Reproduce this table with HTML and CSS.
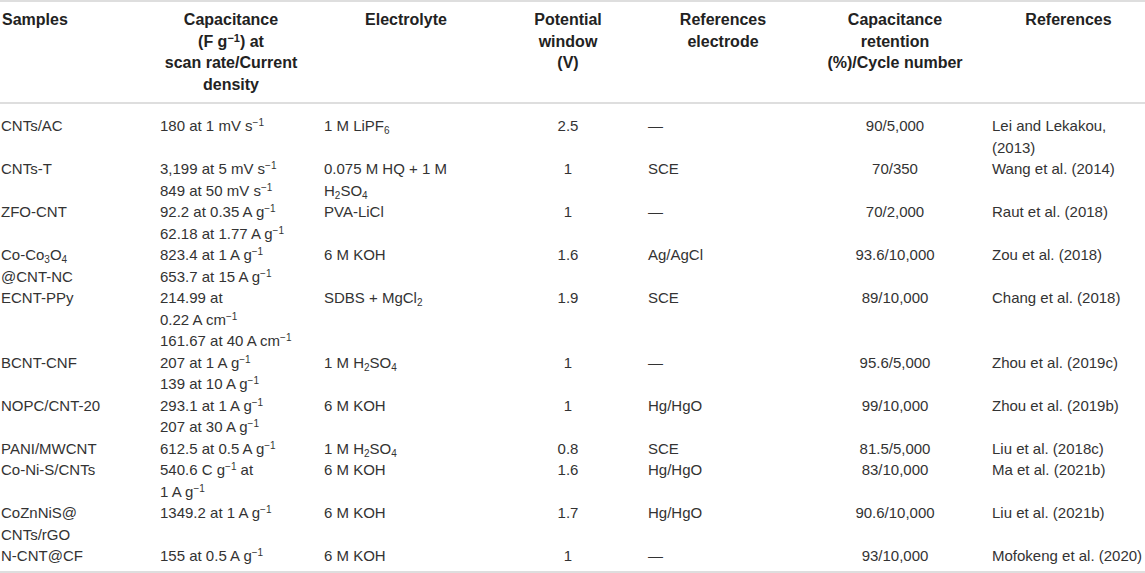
FILE: index.html
```html
<!DOCTYPE html>
<html lang="en">
<head>
    <meta charset="UTF-8">
    <meta name="viewport" content="width=device-width, initial-scale=1.0">
    <title>CNT supercapacitor comparison</title>
    <link rel="stylesheet" href="styles.css">
</head>
<body>
<table class="data-table">
    <colgroup>
        <col class="c-sample">
        <col class="c-cap">
        <col class="c-elec">
        <col class="c-pot">
        <col class="c-ref-el">
        <col class="c-ret">
        <col class="c-ref">
    </colgroup>
    <thead>
        <tr>
            <th class="left">Samples</th>
            <th class="cap-head">Capacitance<br>(F g<sup>&minus;1</sup>) at<br>scan rate/Current<br>density</th>
            <th>Electrolyte</th>
            <th>Potential<br>window<br>(V)</th>
            <th>References<br>electrode</th>
            <th>Capacitance<br>retention<br>(%)/Cycle number</th>
            <th>References</th>
        </tr>
    </thead>
    <tbody>
        <tr>
            <td>CNTs/AC</td>
            <td>180 at 1 mV s<sup>&minus;1</sup></td>
            <td>1 M LiPF<sub>6</sub></td>
            <td class="num">2.5</td>
            <td>&mdash;</td>
            <td class="num">90/5,000</td>
            <td>Lei and Lekakou,<br>(2013)</td>
        </tr>
        <tr>
            <td>CNTs-T</td>
            <td>3,199 at 5 mV s<sup>&minus;1</sup><br>849 at 50 mV s<sup>&minus;1</sup></td>
            <td>0.075 M HQ + 1 M<br>H<sub>2</sub>SO<sub>4</sub></td>
            <td class="num">1</td>
            <td>SCE</td>
            <td class="num">70/350</td>
            <td>Wang et al. (2014)</td>
        </tr>
        <tr>
            <td>ZFO-CNT</td>
            <td>92.2 at 0.35 A g<sup>&minus;1</sup><br>62.18 at 1.77 A g<sup>&minus;1</sup></td>
            <td>PVA-LiCl</td>
            <td class="num">1</td>
            <td>&mdash;</td>
            <td class="num">70/2,000</td>
            <td>Raut et al. (2018)</td>
        </tr>
        <tr>
            <td>Co-Co<sub>3</sub>O<sub>4</sub><br>@CNT-NC</td>
            <td>823.4 at 1 A g<sup>&minus;1</sup><br>653.7 at 15 A g<sup>&minus;1</sup></td>
            <td>6 M KOH</td>
            <td class="num">1.6</td>
            <td>Ag/AgCl</td>
            <td class="num">93.6/10,000</td>
            <td>Zou et al. (2018)</td>
        </tr>
        <tr>
            <td>ECNT-PPy</td>
            <td>214.99 at<br>0.22 A cm<sup>&minus;1</sup><br>161.67 at 40 A cm<sup>&minus;1</sup></td>
            <td>SDBS + MgCl<sub>2</sub></td>
            <td class="num">1.9</td>
            <td>SCE</td>
            <td class="num">89/10,000</td>
            <td>Chang et al. (2018)</td>
        </tr>
        <tr>
            <td>BCNT-CNF</td>
            <td>207 at 1 A g<sup>&minus;1</sup><br>139 at 10 A g<sup>&minus;1</sup></td>
            <td>1 M H<sub>2</sub>SO<sub>4</sub></td>
            <td class="num">1</td>
            <td>&mdash;</td>
            <td class="num">95.6/5,000</td>
            <td>Zhou et al. (2019c)</td>
        </tr>
        <tr>
            <td>NOPC/CNT-20</td>
            <td>293.1 at 1 A g<sup>&minus;1</sup><br>207 at 30 A g<sup>&minus;1</sup></td>
            <td>6 M KOH</td>
            <td class="num">1</td>
            <td>Hg/HgO</td>
            <td class="num">99/10,000</td>
            <td>Zhou et al. (2019b)</td>
        </tr>
        <tr>
            <td>PANI/MWCNT</td>
            <td>612.5 at 0.5 A g<sup>&minus;1</sup></td>
            <td>1 M H<sub>2</sub>SO<sub>4</sub></td>
            <td class="num">0.8</td>
            <td>SCE</td>
            <td class="num">81.5/5,000</td>
            <td>Liu et al. (2018c)</td>
        </tr>
        <tr>
            <td>Co-Ni-S/CNTs</td>
            <td>540.6 C g<sup>&minus;1</sup> at<br>1 A g<sup>&minus;1</sup></td>
            <td>6 M KOH</td>
            <td class="num">1.6</td>
            <td>Hg/HgO</td>
            <td class="num">83/10,000</td>
            <td>Ma et al. (2021b)</td>
        </tr>
        <tr>
            <td>CoZnNiS@<br>CNTs/rGO</td>
            <td>1349.2 at 1 A g<sup>&minus;1</sup></td>
            <td>6 M KOH</td>
            <td class="num">1.7</td>
            <td>Hg/HgO</td>
            <td class="num">90.6/10,000</td>
            <td>Liu et al. (2021b)</td>
        </tr>
        <tr>
            <td>N-CNT@CF</td>
            <td>155 at 0.5 A g<sup>&minus;1</sup></td>
            <td>6 M KOH</td>
            <td class="num">1</td>
            <td>&mdash;</td>
            <td class="num">93/10,000</td>
            <td>Mofokeng et al. (2020)</td>
        </tr>
    </tbody>
</table>
</body>
</html>
```

FILE: styles.css
```css
*{
    box-sizing: border-box;
}

body{
    margin: 0;
    background-color: #fff;
    font-family: "Liberation Sans", Arial, Helvetica, sans-serif;
    font-size: 15px;
    line-height: 21.5px;
    color: #333;
}

.data-table{
    width: 1145px;
    border-collapse: collapse;
    table-layout: fixed;
    border-top: 2px solid #dedede;
    border-bottom: 2px solid #dedede;
}

.c-sample{ width: 154px; }
.c-cap{ width: 164px; }
.c-elec{ width: 176px; }
.c-pot{ width: 148px; }
.c-ref-el{ width: 162px; }
.c-ret{ width: 182px; }
.c-ref{ width: 159px; }

th{
    font-size: 16px;
    font-weight: bold;
    color: #222;
    text-align: center;
    vertical-align: top;
    padding: 7px 6px 7px;
    border-bottom: 2px solid #dedede;
}

th.left{
    text-align: left;
    padding-left: 2px;
}

th.cap-head{
    padding-left: 4px;
    padding-right: 14px;
}

th:last-child, td:last-child{
    padding-right: 0;
}

td{
    vertical-align: top;
    padding: 0 6px;
}

td:first-child{
    padding-left: 1px;
}

td.num{
    text-align: center;
}

tbody tr:first-child td{
    padding-top: 11px;
}

tbody tr:last-child td{
    padding-bottom: 4px;
}

sup, sub{
    font-size: 10px;
    line-height: 0;
}

th sup{
    font-size: 11px;
}

sup{
    vertical-align: 5px;
}

sub{
    vertical-align: -3px;
}
```
